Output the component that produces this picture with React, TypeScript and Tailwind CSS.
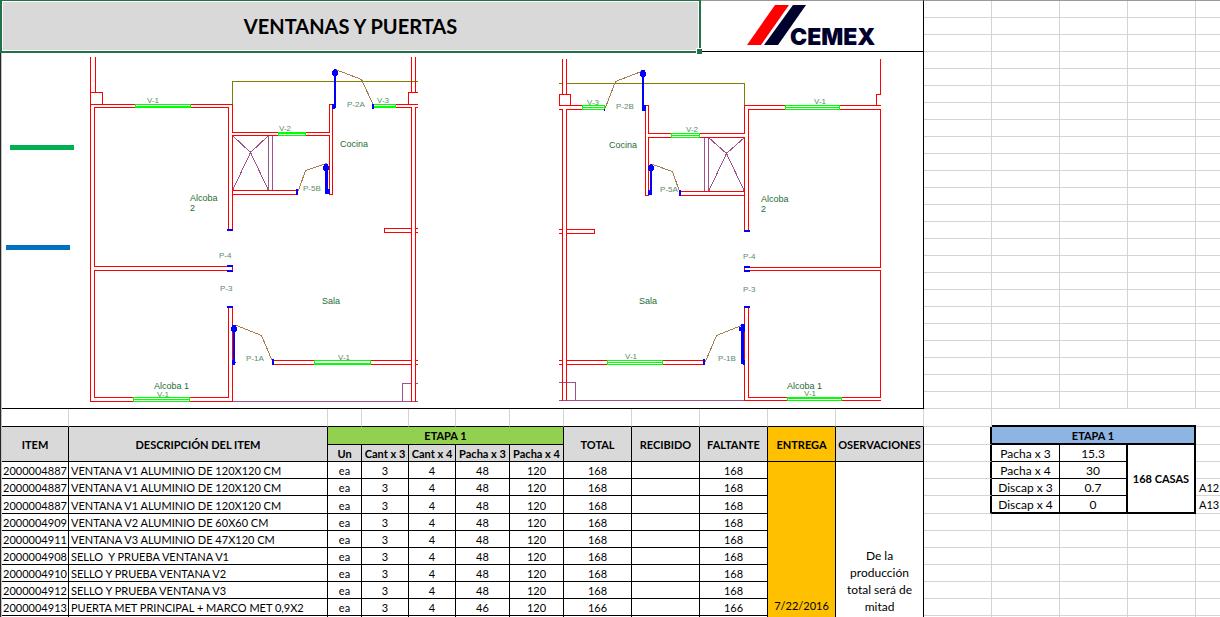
import React from "react";

type Item = [string, string, string, string, string];

const items: Item[] = [
  ["2000004887", "VENTANA V1 ALUMINIO DE 120X120 CM", "48", "120", "168"],
  ["2000004887", "VENTANA V1 ALUMINIO DE 120X120 CM", "48", "120", "168"],
  ["2000004887", "VENTANA V1 ALUMINIO DE 120X120 CM", "48", "120", "168"],
  ["2000004909", "VENTANA V2 ALUMINIO DE 60X60 CM", "48", "120", "168"],
  ["2000004911", "VENTANA V3 ALUMINIO DE 47X120 CM", "48", "120", "168"],
  ["2000004908", "SELLO  Y PRUEBA VENTANA V1", "48", "120", "168"],
  ["2000004910", "SELLO Y PRUEBA VENTANA V2", "48", "120", "168"],
  ["2000004912", "SELLO Y PRUEBA VENTANA V3", "48", "120", "168"],
  ["2000004913", "PUERTA MET PRINCIPAL + MARCO MET 0,9X2", "46", "120", "166"],
];

const RED = "#ff0000";
const LIME = "#00ff00";
const BLUE = "#0000ff";
const PURPLE = "#a0508c";
const OLIVE = "#808000";
const BROWN = "#a67c52";

const walls = [
  // left unit
  "M90 57V401H232 M95 57V92 M90 92H102V104 M90 104H232V132 M94 266V107H228V229 M94 266H228",
  "M232 135V229 M232 132H329V104H332 M232 135H329V194H332V107 M232 190H297 M232 194H297",
  "M396 104H417 M396 107H411 M415 107H417 M411 57V92 M415 57V92 M417 92H408V104",
  "M411 108V401 M415 108V401 M411 228H384V232H411 M415 228H417 M415 232H417",
  "M228 270H94V397H228V307 M232 266V271 M232 307V401",
  "M273 360H411 M273 364H411 M415 360H417 M415 364H417",
  // right unit
  "M562 59V94 M566 59V94 M559 94H570V105 M559 94V105H582 M559 109H562V400 M582 109H566V400",
  "M648 105V133H744V105H880 M648 105H645V195H648V137H744V230 M680 191H744 M680 195H744",
  "M748 230V109H880V267H748 M880 59V94H876V105 M744 267V271",
  "M748 307V397H880V270H748 M744 307V400H880",
  "M559 229H562 M559 233H562 M566 229H594V233H566",
  "M559 360H562 M559 364H562 M566 360H703 M566 364H703",
];

const labels: [number, number, string][] = [
  [147, 103, "V-1"],
  [279, 131, "V-2"],
  [377, 103, "V-3"],
  [347, 107, "P-2A"],
  [303, 191, "P-5B"],
  [219, 258, "P-4"],
  [220, 291, "P-3"],
  [157, 397, "V-1"],
  [246, 361, "P-1A"],
  [338, 360, "V-1"],
  [587, 105, "V-3"],
  [616, 109, "P-2B"],
  [686, 132, "V-2"],
  [660, 192, "P-5A"],
  [814, 104, "V-1"],
  [743, 259, "P-4"],
  [743, 292, "P-3"],
  [625, 359, "V-1"],
  [718, 361, "P-1B"],
  [804, 396, "V-1"],
];

const rooms: [number, number, string][] = [
  [340, 147, "Cocina"],
  [190, 201, "Alcoba"],
  [190, 211, "2"],
  [322, 304, "Sala"],
  [154, 389, "Alcoba 1"],
  [609, 148, "Cocina"],
  [761, 202, "Alcoba"],
  [761, 212, "2"],
  [639, 304, "Sala"],
  [787, 389, "Alcoba 1"],
];

function FloorPlan() {
  return (
    <svg
      viewBox="2 52 921 356"
      width="921"
      height="356"
      className="block"
      role="img"
      aria-label="Planos de ventanas y puertas"
    >
      <rect x="10" y="145" width="64" height="5" fill="#00b050" />
      <rect x="6" y="245" width="64" height="5" fill="#0070c0" />
      <g
        transform="translate(0.5 0.5)"
        fill="none"
        strokeWidth="1"
        strokeLinecap="square"
        shapeRendering="crispEdges"
      >
        <path stroke={OLIVE} d="M232 104V81H417 M559 83H562 M566 83H744V105" />
        <path
          stroke={PURPLE}
          d="M268 135V190 M272 135V190 M232 135L250 152L268 135 M232 190L250 152L268 190 M232 401H417 M402 401V383H411 M415 383H417 M704 137V191 M708 137V191 M708 137L726 153L744 137 M708 191L726 153L744 191 M559 382H575V400 M559 400H744"
        />
        <path
          stroke={BROWN}
          d="M326 163L305 170L298 190 M335 69L361 79L373 105 M236 325L261 335L272 361 M605 107L615 81L641 71 M652 164L672 171L679 191 M705 361L716 335L741 325"
        />
        <path stroke={RED} d={walls.join(" ")} />
      </g>
      <g shapeRendering="crispEdges" fill="#ffffff">
        <path d="M136 105h54v1h-54z M279 134h26v1h-26z M374 105h21v1h-21z M315 361h55v2h-55z M788 399h53v1h-53z" />
      </g>
      <g shapeRendering="crispEdges" fill={LIME}>
        <path
          fillRule="evenodd"
          d="M135 104h56v4h-56z M136 105h54v1h-54z M278 132h28v4h-28z M279 134h26v1h-26z M373 104h23v4h-23z M374 105h21v1h-21z M314 360h57v5h-57z M315 361h55v2h-55z M787 397h55v4h-55z M788 399h53v1h-53z"
        />
        <path
          fillRule="evenodd"
          d="M133 397h57v5h-57z M134 398h55v1h-55z M134 400h55v1h-55z M582 105h23v5h-23z M583 106h21v1h-21z M583 108h21v1h-21z M671 133h29v5h-29z M672 134h27v1h-27z M672 136h27v1h-27z M785 105h55v5h-55z M786 106h53v1h-53z M786 108h53v1h-53z M607 360h56v5h-56z M608 361h54v1h-54z M608 363h54v1h-54z"
        />
      </g>
      <g fill={BLUE} shapeRendering="crispEdges">
        {/* jambs */}
        <path d="M227 229h6v2h-6z M227 265h6v2h-6z M227 270h6v2h-6z M227 306h6v2h-6z M296 189h2v6h-2z M372 104h2v5h-2z M272 359h2v6h-2z" />
        <path d="M744 230h6v2h-6z M744 266h6v2h-6z M744 270h6v2h-6z M744 306h6v2h-6z M679 190h2v6h-2z M604 109h1v2h-1z M703 359h2v6h-2z" />
        {/* door leaves */}
        <path d="M334 69h2v39h-2z M332 104h3v5h-3z M332 71h6v4h-6z M333 70h4v6h-4z" />
        <path d="M325 164h3v30h-3z M325 189h5v5h-5z M323 166h6v4h-6z M324 164h4v7h-4z" />
        <path d="M233 325h2v39h-2z M232 360h3v5h-3z M235 362h1v1h-1z M231 327h6v4h-6z M232 325h4v7h-4z" />
        <path d="M642 70h2v40h-2z M642 105h4v6h-4z M640 72h6v4h-6z M641 70h4v7h-4z" />
        <path d="M650 164h2v30h-2z M648 190h4v5h-4z M648 166h6v4h-6z M649 165h4v6h-4z" />
        <path d="M741 325h3v39h-3z M743 360h2v5h-2z M739 327h6v4h-6z M741 324h4v8h-4z" />
      </g>
      <g fill="#5a8c68" className="font-['Liberation_Sans',sans-serif] text-[8px]">
        {labels.map(([x, y, t]) => (
          <text key={`${x}-${y}`} x={x} y={y}>
            {t}
          </text>
        ))}
      </g>
      <g fill="#1f6b38" className="font-['Liberation_Sans',sans-serif] text-[9px]">
        {rooms.map(([x, y, t]) => (
          <text key={`${x}-${y}`} x={x} y={y}>
            {t}
          </text>
        ))}
      </g>
    </svg>
  );
}

function Logo() {
  return (
    <svg viewBox="747 5 140 46" width="140" height="46" role="img" aria-label="CEMEX">
      <path d="M775 5H789L761 45H747Z" fill="#ff0000" />
      <path d="M793 5H806L778 45H764Z" fill="#00002d" />
      <text
        x="790"
        y="45"
        fill="#00002d"
        className="font-['Inter',sans-serif] text-[23px] font-black"
      >
        CEMEX
      </text>
    </svg>
  );
}

const line = "border-r border-b border-black";
const head = `${line} bg-[#d9d9d9] p-0 font-bold`;
const cell = `${line} p-0 pt-px text-center`;
const colWidths = [
  "w-[67px]", "w-[259px]", "w-[34px]", "w-[47px]", "w-[47px]", "w-[54px]",
  "w-[54px]", "w-[68px]", "w-[68px]", "w-[68px]", "w-[68px]", "w-[88px]",
];

function ItemsTable() {
  return (
    <table className="w-[922px] table-fixed border-separate border-spacing-0 text-[11px] leading-[15px] whitespace-nowrap">
      <colgroup>
        {colWidths.map((w, i) => (
          <col key={i} className={w} />
        ))}
      </colgroup>
      <thead>
        <tr className="h-[18px]">
          {colWidths.map((_, i) => (
            <td key={i} className="border-r border-b border-r-[#d4d4d4] border-b-black p-0" />
          ))}
        </tr>
        <tr className="h-[18px]">
          <th rowSpan={2} className={head}>ITEM</th>
          <th rowSpan={2} className={head}>DESCRIPCIÓN DEL ITEM</th>
          <th colSpan={5} className="border-r border-b border-black bg-[#92d050] p-0 font-bold">ETAPA 1</th>
          <th rowSpan={2} className={head}>TOTAL</th>
          <th rowSpan={2} className={head}>RECIBIDO</th>
          <th rowSpan={2} className={head}>FALTANTE</th>
          <th rowSpan={2} className="border-r border-b border-black bg-[#ffc000] p-0 font-bold">ENTREGA</th>
          <th rowSpan={2} className={head}>OSERVACIONES</th>
        </tr>
        <tr className="h-[17px]">
          <th className={head}>Un</th>
          <th className={head}>Cant x 3</th>
          <th className={head}>Cant x 4</th>
          <th className={head}>Pacha x 3</th>
          <th className={head}>Pacha x 4</th>
        </tr>
      </thead>
      <tbody>
        {items.map(([code, name, p3, p4, total], i) => (
          <tr key={i} className={i === 2 ? "h-[18px]" : "h-[17px]"}>
            <td className={cell}>{code}</td>
            <td className="border-r border-b border-black p-0 pt-px pl-0.5 whitespace-pre">{name}</td>
            <td className={cell}>ea</td>
            <td className={cell}>3</td>
            <td className={cell}>4</td>
            <td className={cell}>{p3}</td>
            <td className={cell}>{p4}</td>
            <td className={cell}>{total}</td>
            <td className={cell} />
            <td className={cell}>{total}</td>
            {i === 0 && (
              <>
                <td rowSpan={10} className="border-r border-black bg-[#ffc000] p-0 pb-5 text-center align-bottom">
                  7/22/2016
                </td>
                <td
                  rowSpan={10}
                  className="border-r border-black p-0 px-1 pb-[18px] text-center align-bottom text-[12px] leading-[17px] whitespace-normal"
                >
                  De la producción total será de mitad
                </td>
              </>
            )}
          </tr>
        ))}
        <tr className="h-[17px]">
          {colWidths.slice(0, 10).map((_, i) => (
            <td key={i} className={cell} />
          ))}
        </tr>
      </tbody>
    </table>
  );
}

const grid = "border-r border-b border-[#d4d4d4] p-0";
const edge = "border-b border-[#d4d4d4] p-0";
const sideRows: [string, string, string][] = [
  ["Pacha x 3", "15.3", ""],
  ["Pacha x 4", "30", ""],
  ["Discap x 3", "0.7", "A12"],
  ["Discap x 4", "0", "A13"],
];

function EmptyRow({ tall = false }: { tall?: boolean }) {
  return (
    <tr className={tall ? "h-[18px]" : "h-[17px]"}>
      <td className={grid} />
      <td className={grid} />
      <td className={grid} />
      <td className={grid} />
      <td className={edge} />
    </tr>
  );
}

function SideSheet() {
  return (
    <table className="w-full table-fixed border-separate border-spacing-0 text-[12px] leading-[15px] whitespace-nowrap">
      <colgroup>
        <col className="w-[68px]" />
        <col className="w-[68px]" />
        <col className="w-[68px]" />
        <col className="w-[68px]" />
        <col />
      </colgroup>
      <tbody>
        {Array.from({ length: 24 }, (_, i) => (
          <EmptyRow key={i} />
        ))}
        <tr className="h-[18px]">
          <td className={grid} />
          <td colSpan={3} className="border-b-2 border-black p-0" />
          <td className={edge} />
        </tr>
        <tr className="h-[18px]">
          <td className="border-r-2 border-b border-r-black border-b-[#d4d4d4] p-0" />
          <th colSpan={3} className="border-r-2 border-b-2 border-black bg-[#8db4e2] p-0 text-[11px] font-bold">
            ETAPA 1
          </th>
          <td className={edge} />
        </tr>
        {sideRows.map(([name, value, ref], i) => {
          const last = i === sideRows.length - 1;
          const bottom = last ? "border-b-2" : "border-b";
          return (
            <tr key={name} className={last ? "h-[18px]" : "h-[17px]"}>
              <td className="border-r-2 border-b border-r-black border-b-[#d4d4d4] p-0" />
              <td className={`border-r border-black p-0 text-center ${bottom}`}>{name}</td>
              <td className={`border-r-2 border-black p-0 text-center ${bottom}`}>{value}</td>
              {i === 0 && (
                <th rowSpan={4} className="border-r-2 border-b-2 border-black p-0 text-[11px] font-bold">
                  168 CASAS
                </th>
              )}
              <td className="border-b border-[#d4d4d4] p-0 pl-[3px] text-[11px]">{ref}</td>
            </tr>
          );
        })}
        {Array.from({ length: 7 }, (_, i) => (
          <EmptyRow key={i} />
        ))}
      </tbody>
    </table>
  );
}

export default function App() {
  return (
    <div className="flex h-screen items-start overflow-hidden bg-white font-['Lato',sans-serif] text-black">
      <main className="flex-none">
        <header className="flex h-[52px]">
          <div className="relative flex w-[701px] border-t border-r-2 border-b border-l-2 border-[#217346] bg-white p-px">
            <h1 className="flex flex-1 items-center justify-center bg-[#d9d9d9] text-[20px] leading-6 font-bold">
              VENTANAS Y PUERTAS
            </h1>
            <span className="absolute -bottom-0.5 -left-0.5 h-px w-[698px] bg-[#217346]" />
            <span className="absolute -right-[3px] -bottom-[3px] size-[6px] border-t border-l border-white bg-[#217346]" />
          </div>
          <div className="flex w-[223px] items-start border-t border-r border-b border-t-[#999999] border-r-black border-b-black pt-1 pl-[46px]">
            <Logo />
          </div>
        </header>
        <div className="border-l border-[#262626]">
          <div className="border-l border-[#c4c4c4]">
            <div className="border-r border-b border-black">
              <FloorPlan />
            </div>
            <ItemsTable />
          </div>
        </div>
      </main>
      <aside className="min-w-0 flex-1 border-t border-[#999999]">
        <SideSheet />
      </aside>
    </div>
  );
}
